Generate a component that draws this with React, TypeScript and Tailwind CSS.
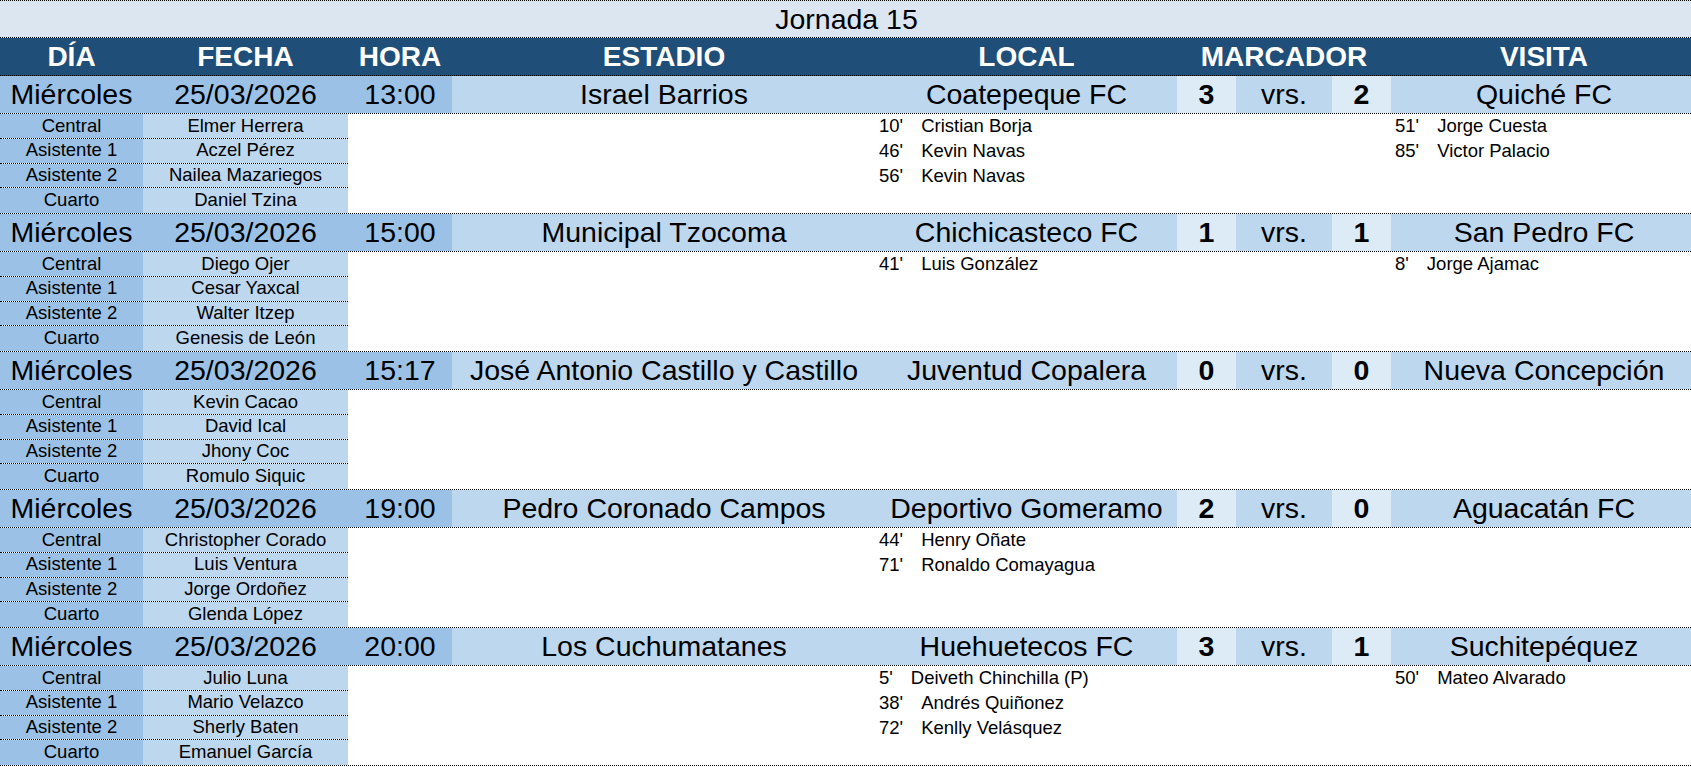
import React from 'react';

type Goal = [string, string];

interface Match {
  dia: string;
  fecha: string;
  hora: string;
  estadio: string;
  local: string;
  golesLocal: number;
  golesVisita: number;
  visita: string;
  arbitros: string[];
  anotadoresLocal: Goal[];
  anotadoresVisita: Goal[];
}

const ROLES = ['Central', 'Asistente 1', 'Asistente 2', 'Cuarto'];

const matches: Match[] = [
  {
    dia: 'Miércoles', fecha: '25/03/2026', hora: '13:00',
    estadio: 'Israel Barrios', local: 'Coatepeque FC', golesLocal: 3, golesVisita: 2, visita: 'Quiché FC',
    arbitros: ['Elmer Herrera', 'Aczel Pérez', 'Nailea Mazariegos', 'Daniel Tzina'],
    anotadoresLocal: [['10', 'Cristian Borja'], ['46', 'Kevin Navas'], ['56', 'Kevin Navas']],
    anotadoresVisita: [['51', 'Jorge Cuesta'], ['85', 'Victor Palacio']],
  },
  {
    dia: 'Miércoles', fecha: '25/03/2026', hora: '15:00',
    estadio: 'Municipal Tzocoma', local: 'Chichicasteco FC', golesLocal: 1, golesVisita: 1, visita: 'San Pedro FC',
    arbitros: ['Diego Ojer', 'Cesar Yaxcal', 'Walter Itzep', 'Genesis de León'],
    anotadoresLocal: [['41', 'Luis González']],
    anotadoresVisita: [['8', 'Jorge Ajamac']],
  },
  {
    dia: 'Miércoles', fecha: '25/03/2026', hora: '15:17',
    estadio: 'José Antonio Castillo y Castillo', local: 'Juventud Copalera', golesLocal: 0, golesVisita: 0, visita: 'Nueva Concepción',
    arbitros: ['Kevin Cacao', 'David Ical', 'Jhony Coc', 'Romulo Siquic'],
    anotadoresLocal: [],
    anotadoresVisita: [],
  },
  {
    dia: 'Miércoles', fecha: '25/03/2026', hora: '19:00',
    estadio: 'Pedro Coronado Campos', local: 'Deportivo Gomeramo', golesLocal: 2, golesVisita: 0, visita: 'Aguacatán FC',
    arbitros: ['Christopher Corado', 'Luis Ventura', 'Jorge Ordoñez', 'Glenda López'],
    anotadoresLocal: [['44', 'Henry Oñate'], ['71', 'Ronaldo Comayagua']],
    anotadoresVisita: [],
  },
  {
    dia: 'Miércoles', fecha: '25/03/2026', hora: '20:00',
    estadio: 'Los Cuchumatanes', local: 'Huehuetecos FC', golesLocal: 3, golesVisita: 1, visita: 'Suchitepéquez',
    arbitros: ['Julio Luna', 'Mario Velazco', 'Sherly Baten', 'Emanuel García'],
    anotadoresLocal: [['5', 'Deiveth Chinchilla (P)'], ['38', 'Andrés Quiñonez'], ['72', 'Kenlly Velásquez']],
    anotadoresVisita: [['50', 'Mateo Alvarado']],
  },
];

function GoalList({ goals, className }: { goals: Goal[]; className: string }) {
  return (
    <div className={`flex flex-col ${className}`}>
      {goals.map(([min, name], i) => (
        <div key={i} className="h-[25px] flex items-center whitespace-nowrap">
          <span>{min}'</span>
          <span className="ml-[18px]">{name}</span>
        </div>
      ))}
    </div>
  );
}

function MatchBlock({ m }: { m: Match }) {
  return (
    <div>
      {/* main row */}
      <div className="flex h-[38px] border-b border-dotted border-black text-[28.5px] leading-none">
        <div className="w-[143px] shrink-0 bg-[#9bc2e6] flex items-center justify-center">{m.dia}</div>
        <div className="w-[205px] shrink-0 bg-[#9bc2e6] flex items-center justify-center">{m.fecha}</div>
        <div className="w-[104px] shrink-0 bg-[#9bc2e6] flex items-center justify-center">{m.hora}</div>
        <div className="w-[424px] shrink-0 bg-[#bdd7ee] flex items-center justify-center whitespace-nowrap">{m.estadio}</div>
        <div className="w-[301px] shrink-0 bg-[#bdd7ee] flex items-center justify-center whitespace-nowrap">{m.local}</div>
        <div className="w-[59px] shrink-0 bg-[#ddebf7] flex items-center justify-center font-bold">{m.golesLocal}</div>
        <div className="w-[96px] shrink-0 bg-[#bdd7ee] flex items-center justify-center">vrs.</div>
        <div className="w-[59px] shrink-0 bg-[#ddebf7] flex items-center justify-center font-bold">{m.golesVisita}</div>
        <div className="w-[306px] shrink-0 bg-[#bdd7ee] flex items-center justify-center whitespace-nowrap">{m.visita}</div>
      </div>

      {/* referees + scorers */}
      <div className="flex h-[100px] border-b border-dotted border-black text-[18.5px] leading-none">
        <div className="w-[348px] shrink-0 flex flex-col">
          {ROLES.map((role, i) => (
            <div
              key={role}
              className={`flex h-[25px] ${i < 3 ? 'border-b border-dotted border-black' : 'h-[24px]'}`}
            >
              <div className="w-[143px] bg-[#9bc2e6] flex items-center justify-center">{role}</div>
              <div className="w-[205px] bg-[#bdd7ee] flex items-center justify-center whitespace-nowrap">{m.arbitros[i]}</div>
            </div>
          ))}
        </div>
        <div className="w-[528px] shrink-0" />
        <GoalList goals={m.anotadoresLocal} className="w-[301px] shrink-0 pl-[3px]" />
        <div className="w-[214px] shrink-0" />
        <GoalList goals={m.anotadoresVisita} className="w-[306px] shrink-0 pl-[4px]" />
      </div>
    </div>
  );
}

export default function App() {
  return (
    <div className="w-full h-[767px] overflow-hidden bg-white text-black font-['Liberation_Sans',Arial,sans-serif]">
      <div className="w-[1697px]">
        {/* title */}
        <div className="h-[38px] bg-[#dce6f1] border-y border-dotted border-black flex items-center justify-center text-[28.5px] leading-none">
          <span className="ml-[-4px]">Jornada 15</span>
        </div>

        {/* column headers */}
        <div className="flex h-[38px] bg-[#1f4e78] border-b border-dotted border-black text-white font-bold text-[28px] leading-none">
          <div className="w-[143px] flex items-center justify-center">DÍA</div>
          <div className="w-[205px] flex items-center justify-center">FECHA</div>
          <div className="w-[104px] flex items-center justify-center">HORA</div>
          <div className="w-[424px] flex items-center justify-center">ESTADIO</div>
          <div className="w-[301px] flex items-center justify-center">LOCAL</div>
          <div className="w-[214px] flex items-center justify-center">MARCADOR</div>
          <div className="w-[306px] flex items-center justify-center">VISITA</div>
        </div>

        {matches.map((m, i) => (
          <MatchBlock key={i} m={m} />
        ))}
      </div>
    </div>
  );
}
